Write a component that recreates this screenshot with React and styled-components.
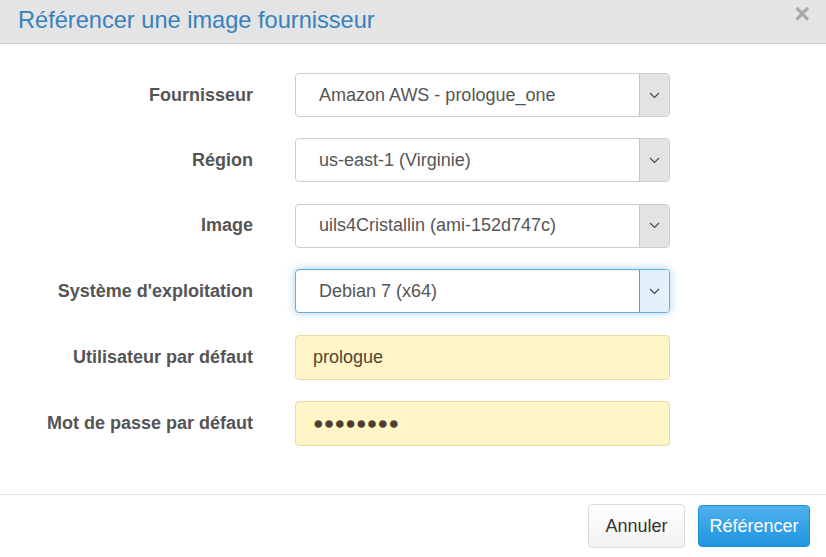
import React from 'react';
import styled, { createGlobalStyle } from 'styled-components';

const GlobalStyle = createGlobalStyle`
  html, body {
    margin: 0;
    padding: 0;
    background: #fff;
  }
  body {
    font-family: "Liberation Sans", Arial, sans-serif;
  }
`;

const Modal = styled.div`
  width: 826px;
  height: 557px;
  display: flex;
  flex-direction: column;
  background: #fff;
  overflow: hidden;
`;

const Header = styled.div`
  height: 43px;
  background: #e4e4e4;
  border-bottom: 1px solid #cfcfcf;
  display: flex;
  align-items: center;
  justify-content: space-between;
  padding: 0 16px 0 18px;
`;

const Title = styled.h4`
  margin: 0;
  font-size: 23.6px;
  font-weight: normal;
  color: #3582bd;
  line-height: 1;
  padding-bottom: 2px;
`;

const Close = styled.span`
  font-size: 27px;
  font-weight: bold;
  color: #a8a8a8;
  line-height: 1;
  align-self: flex-start;
  margin-top: 1px;
`;

const Body = styled.div`
  flex: 1;
  display: grid;
  grid-template-columns: 253px 375px;
  column-gap: 42px;
  row-gap: 21.4px;
  align-content: start;
  padding-top: 29px;
`;

const Label = styled.label`
  font-size: 18px;
  font-weight: bold;
  color: #555;
  text-align: right;
  align-self: center;
`;

const Select = styled.div`
  height: 44px;
  box-sizing: border-box;
  border: 1px solid ${p => (p.$focus ? '#66afe9' : '#cccccc')};
  border-radius: 4px;
  display: flex;
  align-items: stretch;
  background: #fff;
  box-shadow: ${p =>
    p.$focus ? 'inset 0 1px 1px rgba(0,0,0,.075), 0 0 8px rgba(102,175,233,.6)' : 'none'};
  overflow: hidden;
`;

const SelectValue = styled.div`
  flex: 1;
  display: flex;
  align-items: center;
  padding-left: 23px;
  font-size: 18px;
  color: #555;
`;

const Caret = styled.div`
  width: 29px;
  border-left: 1px solid ${p => (p.$focus ? '#4a9ee5' : '#c6c6c6')};
  background: ${p => (p.$focus ? '#e4f0fb' : '#e3e3e3')};
  display: flex;
  align-items: center;
  justify-content: center;
`;

const Input = styled.div`
  height: 45px;
  box-sizing: border-box;
  border: 1px solid #ebd9a2;
  border-radius: 4px;
  background: #fff5c7;
  display: flex;
  align-items: center;
  padding-left: 17px;
  font-size: 18px;
  color: #4f4535;
`;

const Dots = styled.span`
  font-size: 17.5px;
  letter-spacing: 0.2px;
  color: #4a3f30;
`;

const Footer = styled.div`
  height: 62px;
  border-top: 1px solid #e5e5e5;
  display: flex;
  justify-content: flex-end;
  align-items: center;
  gap: 13px;
  padding-right: 16px;
`;

const Button = styled.button`
  font-family: inherit;
  font-size: 18px;
  border-radius: 4px;
  cursor: pointer;
  box-sizing: border-box;
  height: ${p => (p.$primary ? '42px' : '44px')};
  padding: 0 ${p => (p.$primary ? '10.5px' : '16.5px')};
  color: ${p => (p.$primary ? '#fff' : '#333')};
  border: 1px solid ${p => (p.$primary ? '#1e8fdb' : '#dcdcdc')};
  background: ${p =>
    p.$primary
      ? 'linear-gradient(to bottom, #4fb0ec 0%, #1f95e1 100%)'
      : 'linear-gradient(to bottom, #ffffff 0%, #f1f1f1 100%)'};
`;

const Chevron = () => (
  <svg width="11" height="7" viewBox="0 0 11 7">
    <path d="M1 1 L5.5 5.5 L10 1" fill="none" stroke="#444" strokeWidth="1.1" />
  </svg>
);

const selects = [
  { label: 'Fournisseur', value: 'Amazon AWS - prologue_one' },
  { label: 'Région', value: 'us-east-1 (Virginie)' },
  { label: 'Image', value: 'uils4Cristallin (ami-152d747c)' },
  { label: "Système d'exploitation", value: 'Debian 7 (x64)', focus: true },
];

export default function App() {
  return (
    <>
      <GlobalStyle />
      <Modal>
        <Header>
          <Title>Référencer une image fournisseur</Title>
          <Close>×</Close>
        </Header>
        <Body>
          {selects.map(s => (
            <React.Fragment key={s.label}>
              <Label>{s.label}</Label>
              <Select $focus={s.focus}>
                <SelectValue>{s.value}</SelectValue>
                <Caret $focus={s.focus}>
                  <Chevron />
                </Caret>
              </Select>
            </React.Fragment>
          ))}
          <Label>Utilisateur par défaut</Label>
          <Input>prologue</Input>
          <Label>Mot de passe par défaut</Label>
          <Input>
            <Dots>●●●●●●●●</Dots>
          </Input>
        </Body>
        <Footer>
          <Button>Annuler</Button>
          <Button $primary>Référencer</Button>
        </Footer>
      </Modal>
    </>
  );
}
